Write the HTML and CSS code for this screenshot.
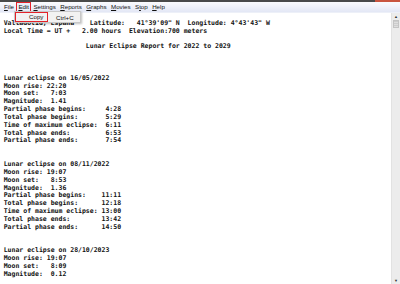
FILE: index.html
```html
<!DOCTYPE html>
<html lang="es">
<head>
    <meta charset="UTF-8">
    <title>Lunar Eclipse Report</title>
    <link rel="stylesheet" href="styles.css">
</head>
<body>
    <!-- Barra de título (sólo el borde inferior visible) -->
    <div class="titlebar"><span class="close-btn"></span></div>

    <!-- Menú principal -->
    <div class="menubar">
        <span class="menu-item"><u>F</u>ile</span>
        <span class="menu-item active"><u>E</u>dit</span>
        <span class="menu-item"><u>S</u>ettings</span>
        <span class="menu-item"><u>R</u>eports</span>
        <span class="menu-item"><u>G</u>raphs</span>
        <span class="menu-item"><u>M</u>ovies</span>
        <span class="menu-item">S<u>t</u>op</span>
        <span class="menu-item"><u>H</u>elp</span>
    </div>

    <!-- Menú desplegable de Edit -->
    <div class="dropdown">
        <div class="dropdown-row">
            <span class="dropdown-label">Copy</span>
            <span class="dropdown-key">Ctrl+C</span>
        </div>
    </div>

    <div class="main">
<pre class="report">Valladolid, España    Latitude:   41°39'09" N  Longitude: 4°43'43" W
Local Time = UT +   2.00 hours  Elevation:700 meters

                     Lunar Eclipse Report for 2022 to 2029



Lunar eclipse on 16/05/2022
Moon rise: 22:20
Moon set:   7:03
Magnitude:  1.41
Partial phase begins:     4:28
Total phase begins:       5:29
Time of maximum eclipse:  6:11
Total phase ends:         6:53
Partial phase ends:       7:54


Lunar eclipse on 08/11/2022
Moon rise: 19:07
Moon set:   8:53
Magnitude:  1.36
Partial phase begins:    11:11
Total phase begins:      12:18
Time of maximum eclipse: 13:00
Total phase ends:        13:42
Partial phase ends:      14:50


Lunar eclipse on 28/10/2023
Moon rise: 19:07
Moon set:   8:09
Magnitude:  0.12
</pre>
        <!-- Barra de desplazamiento vertical -->
        <div class="scrollbar">
            <span class="arrow">&#9650;</span>
            <div class="thumb"></div>
            <span class="arrow down">&#9660;</span>
        </div>
    </div>
</body>
</html>
```

FILE: styles.css
```css
/* Ventana principal */
body {
    margin: 0;
    width: 400px;
    height: 284px;
    overflow: hidden;
    background: #fff;
    font-family: "Liberation Sans", Arial, sans-serif;
    position: relative;
}
.titlebar {
    height: 2px;
    background: #4a4a4a;
    display: flex;
    justify-content: flex-end;
}
.close-btn {
    width: 25px;
    background: #c9553f;
}

/* Menú */
.menubar {
    height: 10px;
    display: flex;
    align-items: center;
    gap: 4.4px;
    padding-left: 4px;
    background: linear-gradient(#fbfbfe, #e3e7f5);
    border-bottom: 1px solid #edf0f8;
    font-size: 6.2px;
    color: #111;
}
.menu-item {
    line-height: 8px;
}
.menu-item.active {
    outline: 1.5px solid #e3222a;
    outline-offset: 0.5px;
    padding: 0 1px;
    margin: 0 -1px;
    background: #e8eefa;
}

/* Desplegable */
.dropdown {
    position: absolute;
    left: 14px;
    top: 11px;
    width: 67px;
    height: 12px;
    background: #f2f2f2;
    border: 1px solid #c8c8c8;
    box-shadow: 1px 1px 2px rgba(0, 0, 0, 0.25);
    box-sizing: border-box;
    font-size: 6.2px;
    color: #111;
}
.dropdown-row {
    display: flex;
    align-items: center;
    height: 10px;
}
.dropdown-label {
    width: 31px;
    margin-left: 1px;
    height: 8px;
    line-height: 8px;
    box-sizing: border-box;
    padding-left: 13px;
    outline: 1.5px solid #e3222a;
}
.dropdown-key {
    margin-left: 9px;
}

/* Área de texto del informe */
.main {
    display: flex;
    height: 271px;
}
.report {
    flex: 1;
    margin: 0;
    padding: 6.8px 0 0 3.7px;
    font-family: "DejaVu Sans Mono", "Liberation Mono", monospace;
    font-weight: bold;
    font-size: 6.5px;
    line-height: 7.84px;
    color: #111;
    overflow: hidden;
}
.scrollbar {
    width: 8px;
    background: #ececec;
    border-left: 1px solid #e2e2e2;
    display: flex;
    flex-direction: column;
    align-items: center;
    font-size: 4px;
    color: #333;
}
.arrow {
    height: 7px;
    line-height: 7px;
}
.arrow.down {
    margin-top: auto;
}
.thumb {
    width: 6px;
    height: 8px;
    background: repeating-linear-gradient(#cdcdcd 0 1px, #dedede 1px 2px);
    border: 1px solid #c4c4c4;
    box-sizing: border-box;
}
```
